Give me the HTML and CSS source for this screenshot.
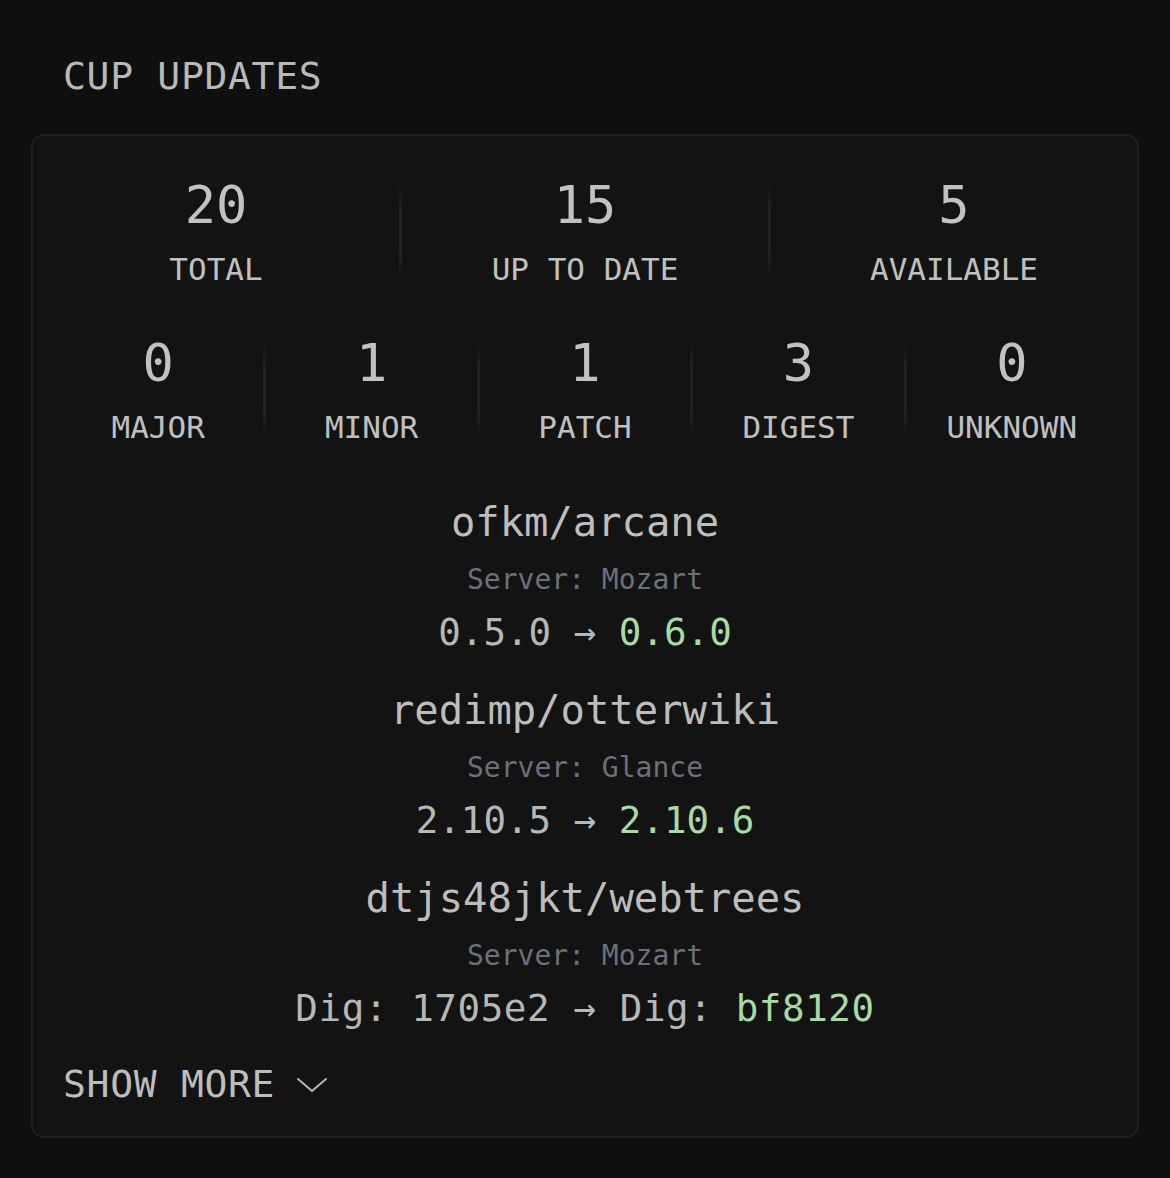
FILE: index.html
```html
<!DOCTYPE html>
<html lang="en">
<head>
<meta charset="utf-8">
<title>Cup Updates</title>
<link rel="stylesheet" href="styles.css">
</head>
<body>
<div class="widget">
  <div class="widget-header">CUP UPDATES</div>
  <div class="card">
    <div class="stats stats-top">
      <div class="stat"><div class="stat-value">20</div><div class="stat-label">TOTAL</div></div>
      <div class="divider"></div>
      <div class="stat"><div class="stat-value">15</div><div class="stat-label">UP TO DATE</div></div>
      <div class="divider"></div>
      <div class="stat"><div class="stat-value">5</div><div class="stat-label">AVAILABLE</div></div>
    </div>
    <div class="stats stats-bottom">
      <div class="stat"><div class="stat-value">0</div><div class="stat-label">MAJOR</div></div>
      <div class="divider"></div>
      <div class="stat"><div class="stat-value">1</div><div class="stat-label">MINOR</div></div>
      <div class="divider"></div>
      <div class="stat"><div class="stat-value">1</div><div class="stat-label">PATCH</div></div>
      <div class="divider"></div>
      <div class="stat"><div class="stat-value">3</div><div class="stat-label">DIGEST</div></div>
      <div class="divider"></div>
      <div class="stat"><div class="stat-value">0</div><div class="stat-label">UNKNOWN</div></div>
    </div>
    <ul class="updates">
      <li class="update">
        <div class="update-name">ofkm/arcane</div>
        <div class="update-server">Server: Mozart</div>
        <div class="update-version">0.5.0 → <span class="new">0.6.0</span></div>
      </li>
      <li class="update">
        <div class="update-name">redimp/otterwiki</div>
        <div class="update-server">Server: Glance</div>
        <div class="update-version">2.10.5 → <span class="new">2.10.6</span></div>
      </li>
      <li class="update">
        <div class="update-name">dtjs48jkt/webtrees</div>
        <div class="update-server">Server: Mozart</div>
        <div class="update-version update-version-digest">Dig: 1705e2 → Dig: <span class="new">bf8120</span></div>
      </li>
    </ul>
    <div class="show-more">
      <span>SHOW MORE</span>
      <svg class="chevron" width="32" height="16" viewBox="0 0 32 16" fill="none" stroke="currentColor" stroke-width="2" stroke-linecap="round" stroke-linejoin="round"><path d="M2 2 L16 14 L30 2"/></svg>
    </div>
  </div>
</div>
</body>
</html>
```

FILE: styles.css
```css
* { box-sizing: border-box; }

html, body {
  margin: 0;
  padding: 0;
  background: #0f0f0f;
}

body {
  font-family: "DejaVu Sans Mono", "Liberation Mono", monospace;
  color: #bcbcbc;
  padding: 54px 31px 0;
}

.widget-header {
  padding-left: 32px;
  font-size: 38px;
  line-height: 44px;
  letter-spacing: 0.7px;
  color: #b9b9b9;
}

.card {
  margin-top: 36px;
  border: 2px solid #1e1e1e;
  border-radius: 13px;
  background: #131313;
  padding: 39px 0 30px;
}

.stats {
  display: grid;
  align-items: stretch;
}

.stats-top {
  grid-template-columns: 1fr 3px 1fr 3px 1fr;
}

.stats-bottom {
  grid-template-columns: 1fr 3px 1fr 3px 1fr 3px 1fr 3px 1fr;
  margin-top: 46px;
  padding: 0 20px;
}

.stat {
  text-align: center;
}

.stat-value {
  font-size: 52px;
  line-height: 60px;
  color: #c2c2c2;
}

.stat-label {
  margin-top: 16px;
  font-size: 31px;
  line-height: 36px;
  color: #c0c0c0;
}

.divider {
  margin: 9px 0;
  background: linear-gradient(to bottom, rgba(40,40,40,0), #222222 25%, #222222 75%, rgba(40,40,40,0));
}

.updates {
  list-style: none;
  margin: 53px 0 0;
  padding: 0;
  display: flex;
  flex-direction: column;
  gap: 32px;
  text-align: center;
}

.update-name {
  font-size: 40.5px;
  line-height: 48px;
  color: #bdbdbd;
}

.update-server {
  margin-top: 17px;
  font-size: 28px;
  line-height: 34px;
  color: #6b707a;
}

.update-version {
  margin-top: 13px;
  font-size: 37.5px;
  line-height: 44px;
  color: #b7b7b7;
}

.update-version-digest {
  letter-spacing: 0.6px;
}

.new {
  color: #a5dca0;
}

.show-more {
  margin-top: 32px;
  padding-left: 30px;
  display: flex;
  align-items: center;
  gap: 21px;
  font-size: 38px;
  line-height: 44px;
  letter-spacing: 0.7px;
  color: #bdbdbd;
}

.chevron {
  display: block;
  margin-top: 2px;
  color: #b5b5b5;
}
```
